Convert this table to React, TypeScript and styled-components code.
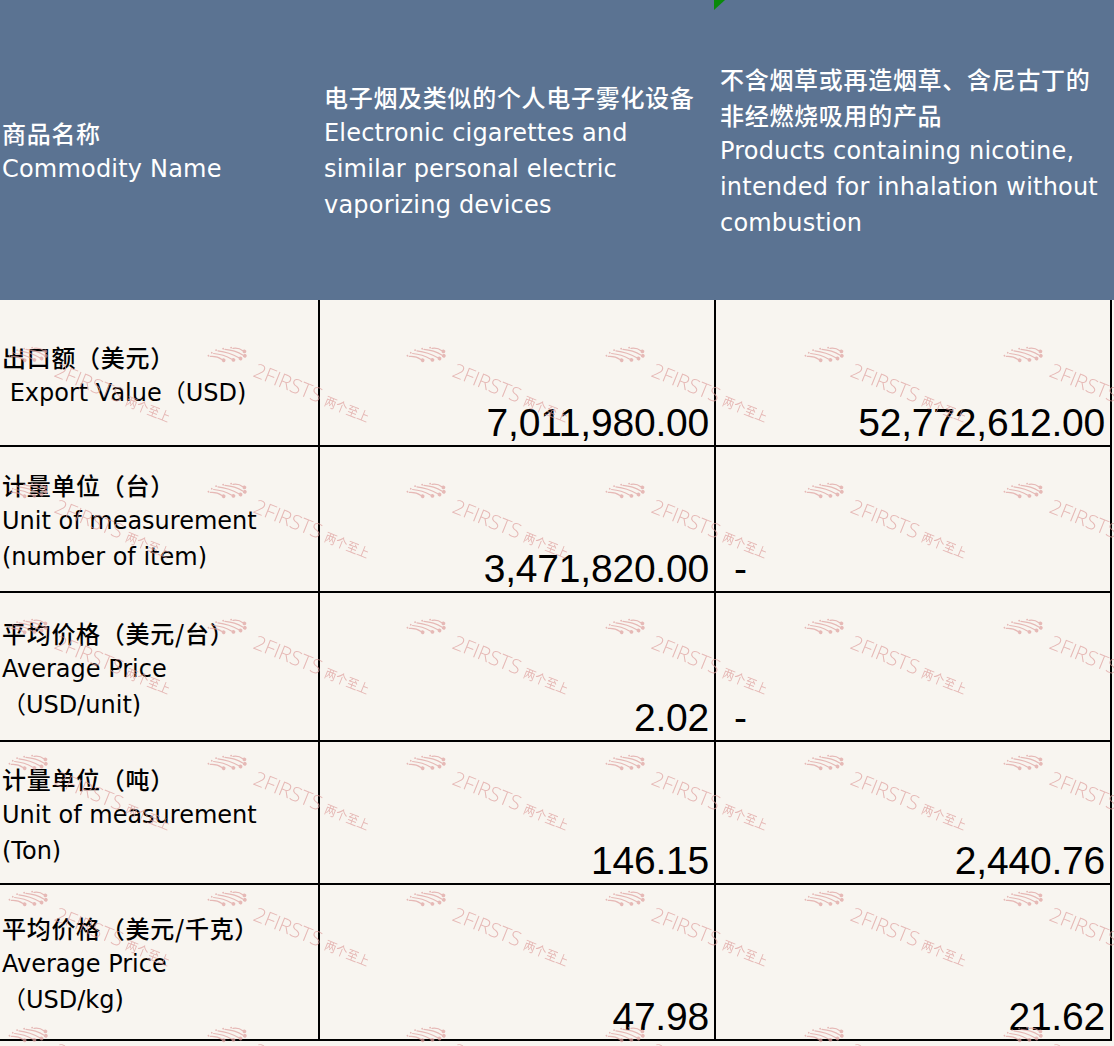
import styled, { createGlobalStyle, css } from "styled-components";

const GlobalStyle = createGlobalStyle`
  html, body {
    margin: 0;
    padding: 0;
  }
  body {
    background: #f8f5f0;
    font-family: "DejaVu Sans", "Noto Sans CJK SC", sans-serif;
  }
`;

const Sheet = styled.div`
  width: 1114px;
  height: 1046px;
  overflow: hidden;
  background: #f8f5f0;
`;

const HeadRow = styled.div`
  display: grid;
  grid-template-columns: 320px 396px 398px;
  height: 300px;
  background: #5b7392;
  color: #ffffff;
`;

const HeadCell = styled.div<{ $marker?: boolean; $pad: number }>`
  position: relative;
  display: flex;
  flex-direction: column;
  justify-content: center;
  padding: 2px 0 0 ${(p) => p.$pad}px;
  font-size: 24px;
  line-height: 36px;
  letter-spacing: 0.2px;
  white-space: nowrap;

  ${(p) =>
    p.$marker &&
    css`
      &::before {
        content: "";
        position: absolute;
        left: -2px;
        top: 0;
        border-top: 10px solid #0a8a0a;
        border-right: 11px solid transparent;
      }
    `}
`;

const Zh = styled.span`
  display: block;
  font-family: "Noto Sans CJK SC", sans-serif;
  font-weight: 500;
  letter-spacing: 0.7px;
`;

const En = styled.span`
  display: block;
  white-space: pre;
`;

const Body = styled.div`
  position: relative;
  display: flex;
  flex-direction: column;
`;

const Row = styled.div<{ $h: number }>`
  display: grid;
  grid-template-columns: 320px 396px 396px;
  height: ${(p) => p.$h}px;
`;

const Cell = styled.div`
  box-sizing: border-box;
  border-right: 2px solid #000;
  border-bottom: 2px solid #000;
  color: #000;
`;

const LabelCell = styled(Cell)`
  display: flex;
  flex-direction: column;
  justify-content: center;
  padding: 4px 0 0 2px;
  font-size: 24px;
  line-height: 36px;
`;

const ValueCell = styled(Cell)<{ $dash?: boolean }>`
  display: flex;
  align-items: flex-end;
  justify-content: ${(p) => (p.$dash ? "flex-start" : "flex-end")};
  padding: 0 5px 0 ${(p) => (p.$dash ? 18 : 0)}px;
  font-family: "Liberation Sans", Arial, sans-serif;
  font-size: 39px;
  line-height: 44px;
  letter-spacing: -0.2px;
`;

const Watermark = styled.svg`
  position: absolute;
  left: 0;
  top: 0;
  pointer-events: none;
`;

const rows = [
  { h: 147, zh: "出口额（美元）", en: [" Export Value（USD)"], a: "7,011,980.00", b: "52,772,612.00" },
  { h: 146, zh: "计量单位（台）", en: ["Unit of measurement", "(number of item)"], a: "3,471,820.00", b: "-" },
  { h: 149, zh: "平均价格（美元/台）", en: ["Average Price", "（USD/unit)"], a: "2.02", b: "-" },
  { h: 143, zh: "计量单位（吨）", en: ["Unit of measurement", "(Ton)"], a: "146.15", b: "2,440.76" },
  { h: 156, zh: "平均价格（美元/千克）", en: ["Average Price", "（USD/kg)"], a: "47.98", b: "21.62" },
];

function Mark() {
  // fan of short strokes with dots, drawn in the text-aligned frame
  const strokes = [
    { y: -20, x1: -28, x2: -18 },
    { y: -16, x1: -35, x2: -16 },
    { y: -12, x1: -41, x2: -19 },
    { y: -8, x1: -44, x2: -25 },
    { y: -4, x1: -46, x2: -34 },
  ];
  return (
    <g transform="translate(47 38) rotate(22)" fill="#de9f9d" stroke="#de9f9d">
      {strokes.map((s, i) => (
        <g key={i}>
          <path
            d={`M${s.x1} ${s.y + 1.5} Q${(s.x1 + s.x2) / 2} ${s.y - 1.5} ${s.x2} ${s.y}`}
            fill="none"
            strokeWidth="1.2"
            strokeLinecap="round"
          />
          <circle cx={s.x2 + 1.8} cy={s.y} r="1.9" stroke="none" />
          <circle cx={s.x1 - 2} cy={s.y + 1.5} r="0.9" stroke="none" />
        </g>
      ))}
      <text
        x="0"
        y="0"
        stroke="none"
        fontFamily="'Open Sans', sans-serif"
        fontWeight="300"
        fontSize="20"
        textLength="72"
        lengthAdjust="spacingAndGlyphs"
      >
        2FIRSTS
      </text>
      <text
        x="77"
        y="0"
        stroke="none"
        fontFamily="'Noto Sans CJK SC', sans-serif"
        fontSize="13"
        textLength="47"
        lengthAdjust="spacingAndGlyphs"
      >
        两个至上
      </text>
    </g>
  );
}

export default function App() {
  return (
    <Sheet>
      <GlobalStyle />
      <HeadRow>
        <HeadCell $pad={2}>
          <Zh>商品名称</Zh>
          <En>Commodity Name</En>
        </HeadCell>
        <HeadCell $pad={4}>
          <Zh>电子烟及类似的个人电子雾化设备</Zh>
          <En>Electronic cigarettes and</En>
          <En>similar personal electric</En>
          <En>vaporizing devices</En>
        </HeadCell>
        <HeadCell $pad={4} $marker>
          <Zh>不含烟草或再造烟草、含尼古丁的</Zh>
          <Zh>非经燃烧吸用的产品</Zh>
          <En>Products containing nicotine,</En>
          <En>intended for inhalation without</En>
          <En>combustion</En>
        </HeadCell>
      </HeadRow>
      <Body>
        {rows.map((r) => (
          <Row key={r.zh} $h={r.h}>
            <LabelCell>
              <Zh>{r.zh}</Zh>
              {r.en.map((line) => (
                <En key={line}>{line}</En>
              ))}
            </LabelCell>
            <ValueCell>{r.a}</ValueCell>
            <ValueCell $dash={r.b === "-"}>{r.b}</ValueCell>
          </Row>
        ))}
        <Watermark width="1114" height="746" viewBox="0 0 1114 746">
          <defs>
            <pattern id="wm" x="6" y="38" width="199" height="136" patternUnits="userSpaceOnUse">
              <Mark />
            </pattern>
          </defs>
          <rect width="1114" height="746" fill="url(#wm)" opacity="0.7" />
        </Watermark>
      </Body>
    </Sheet>
  );
}
